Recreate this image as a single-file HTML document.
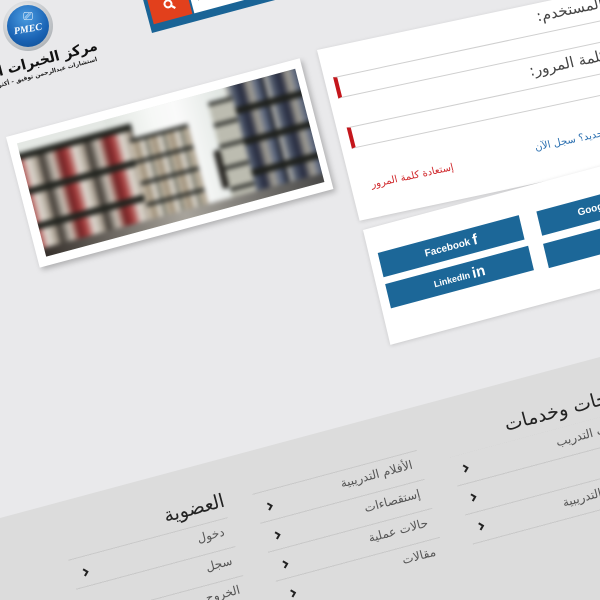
<!DOCTYPE html>
<html><head><meta charset="utf-8">
<style>
*{margin:0;padding:0;box-sizing:border-box}
html,body{width:600px;height:600px;overflow:hidden;background:#e9e9eb;font-family:"DejaVu Sans","Liberation Sans",sans-serif}
#w{position:relative;width:600px;height:600px;overflow:hidden}
.a{position:absolute}
.ar{direction:rtl;white-space:nowrap}
.cv{position:absolute;width:6px;height:9px}
</style></head><body><div id="w">

<svg class="a" style="left:0;top:0" width="600" height="600"><polygon points="0,518 600,357 600,600 0,600" fill="#dcdcdc"/></svg>

<!-- footer content -->
<div class="a" style="left:0;top:518px;width:700px;height:160px;transform:rotate(-15deg);transform-origin:0 0;">
  <div class="a ar" style="right:60px;top:30px;font-size:19px;color:#222;">منتجات وخدمات</div>
  <div class="a ar" style="right:479px;top:30px;font-size:19px;color:#222;">العضوية</div>

  <div class="a ar" style="right:70px;top:64px;font-size:12px;color:#555;">دورات التدريب</div>
  <div class="a ar" style="right:70px;top:94px;font-size:12px;color:#555;">الكتب</div>
  <div class="a ar" style="right:70px;top:124px;font-size:12px;color:#555;">الملفات التدريبية</div>
  <div class="a" style="left:450px;top:58px;width:180px;height:100px;background:repeating-linear-gradient(to bottom,transparent 0,transparent 29px,#c9c9c9 29px,#c9c9c9 30px)"></div>

  <div class="a ar" style="right:288px;top:48px;font-size:12px;color:#555;">الأفلام التدريبية</div>
  <div class="a ar" style="right:288px;top:78px;font-size:12px;color:#555;">إستقصاءات</div>
  <div class="a ar" style="right:288px;top:108px;font-size:12px;color:#555;">حالات عملية</div>
  <div class="a ar" style="right:288px;top:138px;font-size:12px;color:#555;">مقالات</div>
  <div class="a" style="left:250px;top:42px;width:170px;height:118px;background:repeating-linear-gradient(to bottom,#c9c9c9 0,#c9c9c9 1px,transparent 1px,transparent 30px)"></div>

  <div class="a ar" style="right:487px;top:64px;font-size:12px;color:#555;">دخول</div>
  <div class="a ar" style="right:487px;top:94px;font-size:12px;color:#555;">سجل</div>
  <div class="a ar" style="right:487px;top:124px;font-size:12px;color:#555;">الخروج</div>
  <div class="a" style="left:55px;top:58px;width:165px;height:100px;background:repeating-linear-gradient(to bottom,#c9c9c9 0,#c9c9c9 1px,transparent 1px,transparent 30px)"></div>

  <!-- chevrons -->
  <svg class="cv" style="left:460px;top:68px" viewBox="0 0 6 9"><polyline points="1,1 4.5,4.5 1,8" fill="none" stroke="#222" stroke-width="2"/></svg>
  <svg class="cv" style="left:460px;top:98px" viewBox="0 0 6 9"><polyline points="1,1 4.5,4.5 1,8" fill="none" stroke="#222" stroke-width="2"/></svg>
  <svg class="cv" style="left:460px;top:128px" viewBox="0 0 6 9"><polyline points="1,1 4.5,4.5 1,8" fill="none" stroke="#222" stroke-width="2"/></svg>
  <svg class="cv" style="left:261px;top:54px" viewBox="0 0 6 9"><polyline points="1,1 4.5,4.5 1,8" fill="none" stroke="#222" stroke-width="2"/></svg>
  <svg class="cv" style="left:261px;top:84px" viewBox="0 0 6 9"><polyline points="1,1 4.5,4.5 1,8" fill="none" stroke="#222" stroke-width="2"/></svg>
  <svg class="cv" style="left:261px;top:114px" viewBox="0 0 6 9"><polyline points="1,1 4.5,4.5 1,8" fill="none" stroke="#222" stroke-width="2"/></svg>
  <svg class="cv" style="left:261px;top:144px" viewBox="0 0 6 9"><polyline points="1,1 4.5,4.5 1,8" fill="none" stroke="#222" stroke-width="2"/></svg>
  <svg class="cv" style="left:66px;top:70px" viewBox="0 0 6 9"><polyline points="1,1 4.5,4.5 1,8" fill="none" stroke="#222" stroke-width="2"/></svg>
</div>

<!-- photo frame -->
<div class="a" style="left:6px;top:137px;width:304px;height:135px;background:#fff;box-shadow:2px 3px 6px rgba(0,0,0,.25);transform:matrix(0.966,-0.259,0.25,0.968,0,0);transform-origin:0 0;">
  <div class="a" style="left:9px;top:9px;width:288px;height:117px;overflow:hidden;background:#e4e8e4;">
    <div class="a" style="left:-10px;top:-10px;width:310px;height:140px;filter:blur(2.5px);">
      <div class="a" style="left:100px;top:0;width:120px;height:140px;background:linear-gradient(to right,#dfe4df,#f6f8f6 40%,#fafafa 60%,#e0e6e2)"></div>
      <div class="a" style="left:0;top:20px;width:125px;height:120px;background:
        repeating-linear-gradient(to bottom,#22241f 0,#22241f 7px,transparent 7px,transparent 36px),
        repeating-linear-gradient(to right,#6a1c20 0,#a8403f 8px,#e0dcd4 16px,#b0a698 24px,#3c3630 30px,#cdc6bb 40px,#7c2c28 48px)"></div>
      <div class="a" style="left:120px;top:35px;width:60px;height:90px;background:
        repeating-linear-gradient(to bottom,#2e302c 0,#2e302c 4px,transparent 4px,transparent 22px),
        repeating-linear-gradient(to right,#d0c8b8 0,#988870 6px,#e0dcd4 12px,#5a5a4a 18px)"></div>
      <div class="a" style="left:198px;top:68px;width:7px;height:40px;background:#2a2824;border-radius:3px"></div>
      <div class="a" style="left:225px;top:0;width:90px;height:140px;background:
        repeating-linear-gradient(to bottom,#1e201c 0,#1e201c 7px,transparent 7px,transparent 32px),
        repeating-linear-gradient(to right,#c4c2b8 0,#4a5468 8px,#22263a 16px,#a8a498 24px,#5a6680 32px,#181a22 40px)"></div>
      <div class="a" style="left:205px;top:20px;width:25px;height:100px;background:repeating-linear-gradient(to bottom,#30322e 0,#30322e 4px,#bcbcb0 4px,#bcbcb0 22px)"></div>
      <div class="a" style="left:0;top:118px;width:310px;height:25px;background:linear-gradient(to right,#2e2824,#a8a49c 50%,#404040)"></div>
    </div>
  </div>
</div>

<!-- login panel -->
<div class="a" style="left:317px;top:50px;width:420px;height:176px;background:#fff;box-shadow:0 1px 4px rgba(0,0,0,.15);transform:matrix(0.978,-0.208,0.242,0.970,0,0);transform-origin:0 0;">
  <div class="a ar" style="right:100px;top:4px;font-size:15px;color:#444;">اسم المستخدم:</div>
  <div class="a" style="left:9px;top:30px;width:400px;height:22px;border:1px solid #cfcfcf;border-left:4px solid #c4161c"></div>
  <div class="a ar" style="right:140px;top:56px;font-size:15px;color:#444;">كلمة المرور:</div>
  <div class="a" style="left:10px;top:82px;width:400px;height:22px;border:1px solid #cfcfcf;border-left:4px solid #c4161c"></div>
  <div class="a ar" style="left:188px;top:136px;font-size:10px;color:#2a6fb0;">عميل جديد؟ سجل الآن</div>
  <div class="a ar" style="left:20px;top:138px;font-size:10px;color:#d0282c;">إستعادة كلمة المرور</div>
</div>

<!-- social panel -->
<div class="a" style="left:363px;top:230px;width:300px;height:118px;background:#fff;box-shadow:0 1px 4px rgba(0,0,0,.15);transform:matrix(0.966,-0.259,0.232,0.973,0,0);transform-origin:0 0;">
  <div class="a" style="left:9px;top:26px;width:146px;height:25px;background:#1c6798;color:#fff;font:bold 10px 'Liberation Sans',sans-serif;text-align:center;line-height:25px">Facebook <span style="font-size:15px;vertical-align:-1px">f</span></div>
  <div class="a" style="left:9px;top:58px;width:148px;height:25px;background:#1c6798;color:#fff;font:bold 9px 'Liberation Sans',sans-serif;text-align:center;line-height:25px">LinkedIn <span style="font-size:15px;vertical-align:-1px">in</span></div>
  <div class="a" style="left:173px;top:27px;width:120px;height:25px;background:#1c6798;color:#fff;font:bold 10px 'Liberation Sans',sans-serif;line-height:25px;padding-left:40px">Google+</div>
  <div class="a" style="left:172px;top:60px;width:120px;height:25px;background:#1c6798;color:#fff;font:bold 10px 'Liberation Sans',sans-serif;line-height:25px;padding-left:60px">Twitter</div>
</div>

<!-- search bar -->
<div class="a" style="left:152px;top:-7px;width:180px;height:40px;background:#1a6496;transform:rotate(-15deg);transform-origin:0 100%;">
  <div class="a" style="left:4px;top:4px;width:40px;height:28px;background:#e2401c;color:#fff;text-align:center;line-height:28px;font-size:12px;font-weight:bold">
    <svg width="12" height="12" viewBox="0 0 12 12" style="vertical-align:-1px"><circle cx="5" cy="5" r="3.5" fill="none" stroke="#fff" stroke-width="2"/><line x1="7.5" y1="7.5" x2="11" y2="11" stroke="#fff" stroke-width="2.2"/></svg>
  </div>
  <div class="a" style="left:46px;top:4px;width:130px;height:28px;background:#fff;font-size:7px;color:#222;padding:10px 0 0 5px">▼</div>
</div>

<!-- logo -->
<div class="a" style="left:3px;top:1px;width:50px;height:50px;border-radius:50%;background:radial-gradient(circle at 40% 35%,#fff,#b8bcc0 70%,#8a8e92);"></div>
<div class="a" style="left:7px;top:5px;width:42px;height:42px;border-radius:50%;background:radial-gradient(circle at 45% 30%,#4a9be0,#1a63b4 60%,#0c4a8e);color:#fff;text-align:center;">
  <div style="font-size:12px;margin-top:5px;line-height:12px">⎚</div>
  <div style="font:italic bold 10px 'Liberation Serif',serif;transform:rotate(-10deg);margin-top:2px">PMEC</div>
</div>
<div class="a ar" style="right:505px;top:38px;font-size:14px;font-weight:bold;color:#111;transform:rotate(-15deg);transform-origin:100% 0;">مركز الخبرات المهنية للإدارة</div>
<div class="a ar" style="right:504px;top:56px;font-size:6px;font-weight:bold;color:#222;transform:rotate(-15deg);transform-origin:100% 0;">استشارات عبدالرحمن توفيق - أكثر من 25 عاماً من الخبرة</div>

</div></body></html>
